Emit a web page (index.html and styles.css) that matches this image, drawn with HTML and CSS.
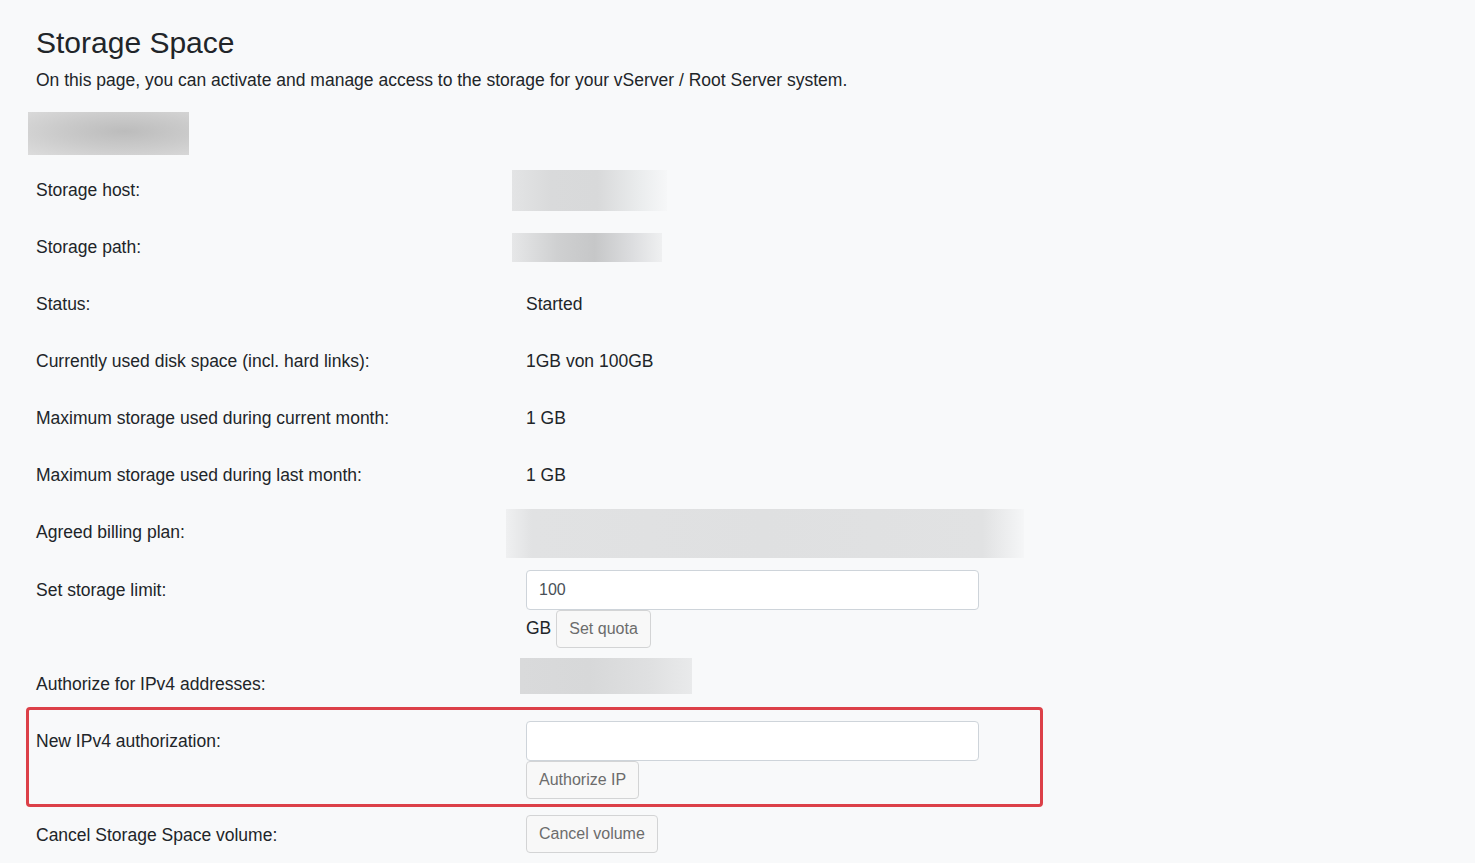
FILE: index.html
```html
<!DOCTYPE html>
<html>
<head lang="en">
    <meta charset="UTF-8">
    <title>Storage Space</title>
    <link rel="stylesheet" href="styles.css">
</head>
<body>
<div class="page">
    <h3 class="title">Storage Space</h3>
    <p class="lead">On this page, you can activate and manage access to the storage for your vServer / Root Server system.</p>
    <div class="blur blur_head"></div>

    <div class="info">
        <div class="row">
            <div class="label">Storage host:</div>
            <div class="value"><div class="blur blur_host"></div></div>
        </div>
        <div class="row">
            <div class="label">Storage path:</div>
            <div class="value"><div class="blur blur_path"></div></div>
        </div>
        <div class="row">
            <div class="label">Status:</div>
            <div class="value">Started</div>
        </div>
        <div class="row">
            <div class="label">Currently used disk space (incl. hard links):</div>
            <div class="value">1GB von 100GB</div>
        </div>
        <div class="row">
            <div class="label">Maximum storage used during current month:</div>
            <div class="value">1 GB</div>
        </div>
        <div class="row">
            <div class="label">Maximum storage used during last month:</div>
            <div class="value">1 GB</div>
        </div>
        <div class="row">
            <div class="label">Agreed billing plan:</div>
            <div class="value"><div class="blur blur_plan"></div></div>
        </div>
        <div class="row">
            <div class="label">Set storage limit:</div>
            <div class="value form">
                <input class="field" type="text" value="100">
                <div class="inline">
                    <span>GB</span>
                    <button class="btn">Set quota</button>
                </div>
            </div>
        </div>
        <div class="row">
            <div class="label">Authorize for IPv4 addresses:</div>
            <div class="value"><div class="blur blur_ip"></div></div>
        </div>
        <div class="row marked">
            <div class="label">New IPv4 authorization:</div>
            <div class="value form">
                <input class="field" type="text" value="">
                <button class="btn">Authorize IP</button>
            </div>
        </div>
        <div class="row">
            <div class="label">Cancel Storage Space volume:</div>
            <div class="value form">
                <button class="btn">Cancel volume</button>
            </div>
        </div>
    </div>
</div>
</body>
</html>
```

FILE: styles.css
```css
html, body {
    margin: 0;
    background: #f8f9fa;
}
body {
    font-family: "Liberation Sans", Arial, sans-serif;
    font-size: 17.5px;
    color: #212529;
}
.page {
    padding: 25px 0 0 36px;
}
.title {
    margin: 0;
    font-size: 30px;
    font-weight: 400;
    line-height: 36px;
}
.lead {
    margin: 7px 0 0;
    line-height: 25.5px;
}
.blur {
    background: radial-gradient(ellipse at 55% 50%, #c9c9ca 0%, #d6d7d8 45%, #e4e5e6 80%, #f1f2f3 100%);
}
.blur_head {
    width: 161px;
    height: 43px;
    margin: 18px 0 0 -8px;
    background: radial-gradient(ellipse at 60% 45%, #bcbcbc 0%, #cbcbcb 50%, #dcdcdc 100%);
}
.blur_host {
    width: 155px;
    height: 41px;
    margin-left: -14px;
    background: linear-gradient(90deg, #e3e4e5 0%, #d9dadb 25%, #d8d9da 55%, #eceeef 85%, #f6f7f8 100%);
}
.blur_path {
    width: 150px;
    height: 29px;
    margin: 6px 0 0 -14px;
    background: linear-gradient(90deg, #e6e7e8 0%, #cfd0d1 30%, #c6c7c8 55%, #dcdddf 80%, #eff0f1 100%);
}
.blur_plan {
    width: 518px;
    height: 49px;
    margin: -3px 0 -4px -20px;
    background: linear-gradient(90deg, #eff0f1 0%, #e1e2e3 5%, #dfe0e1 50%, #e1e2e3 92%, #f5f6f7 100%);
}
.blur_ip {
    width: 172px;
    height: 36px;
    margin: -6px 0 0 -6px;
    background: linear-gradient(90deg, #d9dadb 0%, #d7d8d9 40%, #dfe0e1 75%, #e9eaeb 100%);
}
.info {
    margin-top: 7px;
}
.row {
    display: flex;
    padding: 8px 0;
}
.label {
    width: 490px;
    flex-shrink: 0;
    line-height: 41px;
}
.value {
    line-height: 41px;
}
.value.form {
    display: flex;
    flex-direction: column;
    align-items: flex-start;
    line-height: normal;
}
.field {
    box-sizing: border-box;
    width: 453px;
    height: 40px;
    padding: 0 12px;
    border: 1px solid #ced4da;
    border-radius: 4px;
    background: #fff;
    font-family: inherit;
    font-size: 16px;
    color: #495057;
}
.inline {
    display: flex;
    align-items: center;
    gap: 5px;
}
.btn {
    box-sizing: border-box;
    height: 38px;
    padding: 6px 12px;
    border: 1px solid #d3d4d5;
    border-radius: 4px;
    background: #f8f8f8;
    font-family: inherit;
    font-size: 16px;
    line-height: 24px;
    color: #6c6c6c;
}
.marked {
    position: relative;
}
.marked::after {
    content: "";
    position: absolute;
    left: -10px;
    top: -6px;
    width: 1017px;
    height: 100px;
    box-sizing: border-box;
    border: 3px solid #dc4048;
    border-radius: 4px;
    pointer-events: none;
}
```
